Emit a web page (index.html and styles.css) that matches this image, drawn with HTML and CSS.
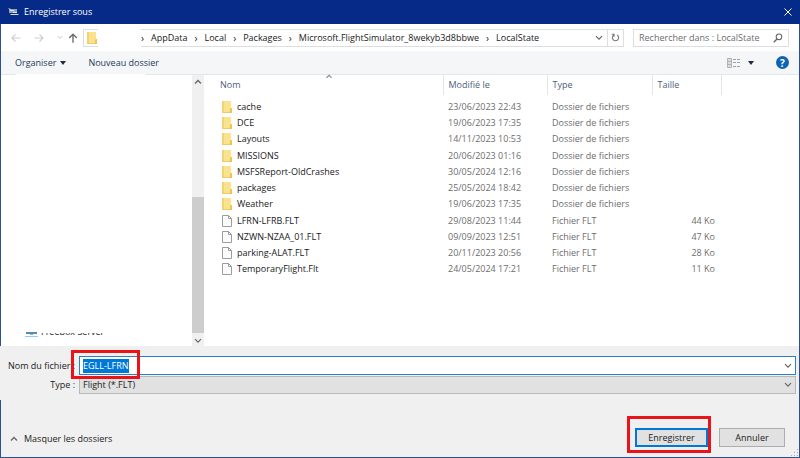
FILE: index.html
```html
<!DOCTYPE html>
<html lang="fr">
<head>
<meta charset="utf-8">
<title>Enregistrer sous</title>
<link rel="stylesheet" href="styles.css">
</head>
<body>
<svg width="0" height="0" class="defs" aria-hidden="true">
  <symbol id="folder" viewBox="0 0 12 14">
    <path d="M1 1h9v12H1z" fill="#fbe38e"/>
    <path d="M1 1h2v12H1z" fill="#f3d373"/>
    <path d="M1 12h8v1H1z" fill="#eccb66"/>
    <path d="M10 8h1v5H9v-4z" fill="#efc44e"/>
  </symbol>
  <symbol id="file" viewBox="0 0 12 14">
    <path d="M1.500 1.500h6l3 3v8h-9z" fill="#fdfdfd" stroke="#9a9da0"/>
    <path d="M7.500 1.500v3h3" fill="none" stroke="#9a9da0"/>
  </symbol>
  <symbol id="down" viewBox="0 0 8 6">
    <path d="M1 1.200l3 3 3-3" fill="none" stroke="currentColor" stroke-width="1.200"/>
  </symbol>
  <symbol id="up" viewBox="0 0 8 6">
    <path d="M1 4.500l3-3 3 3" fill="none" stroke="currentColor" stroke-width="1.300"/>
  </symbol>
  <symbol id="caret" viewBox="0 0 6 4">
    <path d="M0 0h6L3 4z" fill="#1e2b44"/>
  </symbol>
</svg>
<main class="dialog">
  <header class="titlebar">
    <svg class="app-icon" viewBox="0 0 11 8"><path d="M1 1h8v4H1z" fill="#8fa0b4"/><path d="M2 2h4v1H2zM5 4h4v1H5z" fill="#e8eef2"/><path d="M0 0l3 1-1 1zM2 6h8l1 1H3z" fill="#d8dde2"/></svg>
    <h1>Enregistrer sous</h1>
    <button class="close" aria-label="Fermer"><svg viewBox="0 0 8 8"><path d="M.5.5l7 7M7.500.5l-7 7" stroke="#fff" fill="none"/></svg></button>
  </header>

  <nav class="navbar">
    <button class="nav" aria-label="Précédent"><svg class="arrow" viewBox="0 0 10 10"><path d="M9.500 5H1M4.500 1.500L1 5l3.500 3.500" fill="none" stroke="#cfcfcf" stroke-width="1.200"/></svg></button>
    <button class="nav" aria-label="Suivant"><svg class="arrow" viewBox="0 0 10 10"><path d="M.5 5H9M5.500 1.500L9 5 5.500 8.500" fill="none" stroke="#cfcfcf" stroke-width="1.200"/></svg></button>
    <button class="nav recent" aria-label="Emplacements récents"><svg class="chev-small"><use href="#down"/></svg></button>
    <button class="nav parent" aria-label="Dossier parent"><svg class="arrow" viewBox="0 0 10 10"><path d="M5 9.800V1.200M1.200 5L5 1.200 8.800 5" fill="none" stroke="#6d6d6d" stroke-width="1.400"/></svg></button>
    <div class="address">
      <span class="root"><svg class="icon"><use href="#folder"/></svg></span>
      <div class="crumbs">
        <i>›</i><a href="#">AppData</a><i>›</i><a href="#">Local</a><i>›</i><a href="#">Packages</a><i>›</i><a href="#">Microsoft.FlightSimulator_8wekyb3d8bbwe</a><i>›</i><a href="#">LocalState</a>
        <button class="history" aria-label="Historique"><svg class="chev"><use href="#down"/></svg></button>
        <button class="refresh" aria-label="Actualiser"><svg viewBox="0 0 10 10"><path d="M3.200 2.200A3.500 3.500 0 1 0 6.800 2.200M3.400 4.200V1.300H.9" fill="none" stroke="#777" stroke-width="1.200"/></svg></button>
      </div>
    </div>
    <label class="search">
      <input type="text" aria-label="Rechercher" placeholder="Rechercher dans : LocalState">
      <svg viewBox="0 0 10 10"><circle cx="6" cy="3.800" r="2.800" fill="none" stroke="#666" stroke-width="1.100"/><path d="M4 6L.8 9.200" stroke="#666" stroke-width="1.400"/></svg>
    </label>
  </nav>

  <div class="toolbar">
    <button>Organiser <svg class="caret"><use href="#caret"/></svg></button>
    <button>Nouveau dossier</button>
    <button class="view" aria-label="Affichage"><svg class="view-icon" viewBox="0 0 14 10"><path d="M.5.5h4v9h-4zM.5 3.500h4M.5 6.500h4" fill="#ddd" stroke="#b5b2b2"/><path d="M6 1.500h3M10 1.500h3M6 4.500h3M10 4.500h3M6 8.500h3M10 8.500h3" stroke="#9da0a6"/></svg><svg class="caret"><use href="#caret"/></svg></button>
    <button class="help" aria-label="Aide">?</button>
  </div>

  <section class="content">
    <aside class="tree">
      <div class="tree-item"><svg viewBox="0 0 13 5"><path d="M1 0h11v2H1z" fill="#4e8fb8"/><path d="M5 2h3v1H5z" fill="#9ac"/><path d="M0 4h13v1H0z" fill="#9ccbe0"/></svg><span>Freebox Server</span></div>
    </aside>
    <div class="scrollbar">
      <svg class="chev"><use href="#up"/></svg>
      <div class="thumb"></div>
      <svg class="chev"><use href="#down"/></svg>
    </div>
    <div class="files">
      <svg class="sort"><use href="#up"/></svg>
      <table>
        <colgroup><col class="c-name"><col class="c-date"><col class="c-type"><col class="c-size"><col></colgroup>
        <thead><tr><th>Nom</th><th>Modifié le</th><th>Type</th><th>Taille</th><th></th></tr></thead>
        <tbody>
          <tr><td><svg class="icon"><use href="#folder"/></svg>cache</td><td>23/06/2023 22:43</td><td>Dossier de fichiers</td><td></td><td></td></tr>
          <tr><td><svg class="icon"><use href="#folder"/></svg>DCE</td><td>19/06/2023 17:35</td><td>Dossier de fichiers</td><td></td><td></td></tr>
          <tr><td><svg class="icon"><use href="#folder"/></svg>Layouts</td><td>14/11/2023 10:53</td><td>Dossier de fichiers</td><td></td><td></td></tr>
          <tr><td><svg class="icon"><use href="#folder"/></svg>MISSIONS</td><td>20/06/2023 01:16</td><td>Dossier de fichiers</td><td></td><td></td></tr>
          <tr><td><svg class="icon"><use href="#folder"/></svg>MSFSReport-OldCrashes</td><td>30/05/2024 12:16</td><td>Dossier de fichiers</td><td></td><td></td></tr>
          <tr><td><svg class="icon"><use href="#folder"/></svg>packages</td><td>25/05/2024 18:42</td><td>Dossier de fichiers</td><td></td><td></td></tr>
          <tr><td><svg class="icon"><use href="#folder"/></svg>Weather</td><td>19/06/2023 17:35</td><td>Dossier de fichiers</td><td></td><td></td></tr>
          <tr><td><svg class="icon"><use href="#file"/></svg>LFRN-LFRB.FLT</td><td>29/08/2023 11:44</td><td>Fichier FLT</td><td>44 Ko</td><td></td></tr>
          <tr><td><svg class="icon"><use href="#file"/></svg>NZWN-NZAA_01.FLT</td><td>09/09/2023 12:51</td><td>Fichier FLT</td><td>47 Ko</td><td></td></tr>
          <tr><td><svg class="icon"><use href="#file"/></svg>parking-ALAT.FLT</td><td>20/11/2023 20:56</td><td>Fichier FLT</td><td>28 Ko</td><td></td></tr>
          <tr><td><svg class="icon"><use href="#file"/></svg>TemporaryFlight.Flt</td><td>24/05/2024 17:21</td><td>Fichier FLT</td><td>11 Ko</td><td></td></tr>
        </tbody>
      </table>
    </div>
  </section>

  <form class="fields">
    <label for="name">Nom du fichier :</label>
    <div class="combo">
      <input id="name" type="text" value="EGLL-LFRN" autocomplete="off" spellcheck="false">
      <svg class="chev"><use href="#down"/></svg>
      <span class="mark mark-name"></span>
    </div>
    <label for="type">Type :</label>
    <div class="combo combo-type">
      <select id="type"><option>Flight (*.FLT)</option></select>
      <svg class="chev"><use href="#down"/></svg>
    </div>
  </form>

  <footer class="footer">
    <button class="toggle"><svg class="chev"><use href="#up"/></svg>Masquer les dossiers</button>
    <div class="primary"><button class="btn btn-default">Enregistrer</button><span class="mark mark-save"></span></div>
    <button class="btn">Annuler</button>
    <svg class="grip" viewBox="0 0 8 8"><path d="M6 0h1v1H6zM3 3h1v1H3zM6 3h1v1H6zM0 6h1v1H0zM3 6h1v1H3zM6 6h1v1H6z" fill="#aaa"/></svg>
  </footer>
</main>
<script src="select.js"></script>
</body>
</html>
```
FILE: select.js
```js
const nameField = document.getElementById("name");
nameField.focus();
nameField.select();
```
FILE: styles.css
```css
* { box-sizing: border-box; }
body {
  margin: 0;
  font: 9px/14px "Open Sans", "Noto Sans", sans-serif;
  color: #1a1a1a;
}
button, input, select { font: inherit; color: inherit; }
button { padding: 0; border: 0; background: none; }
a { color: inherit; text-decoration: none; }
svg { display: block; flex: none; }
.defs { position: absolute; }
.icon { width: 12px; height: 14px; }
.chev { width: 8px; height: 6px; color: #666; }
.caret { width: 6px; height: 4px; }

.dialog {
  min-height: 100vh;
  display: flex;
  flex-direction: column;
  border: 1px solid #2d4f9b;
  border-top: 0;
  background: #f0f0f0;
}

.titlebar {
  height: 24px;
  display: flex;
  align-items: center;
  gap: 5px;
  padding: 0 8px;
  margin: 0 -1px;
  background: #062a88;
  color: #fff;
}
.titlebar h1 { margin: 0; font-size: inherit; font-weight: 400; }
.app-icon { width: 11px; height: 8px; }
.close { margin-left: auto; }
.close svg { width: 8px; height: 8px; }

.navbar {
  height: 27px;
  display: flex;
  align-items: center;
  padding: 0 10px;
  background: #fff;
}
.nav { width: 23px; display: flex; }
.arrow { width: 10px; height: 10px; }
.recent { width: 11px; }
.chev-small { width: 6px; height: 5px; color: #bbb; }
.parent { width: 15px; }
.address { flex: 1; display: flex; justify-content: space-between; height: 18px; }
.root {
  width: 15px;
  padding: 1px 2px;
  border: 1px solid #dedede;
  border-right: 0;
}
.crumbs {
  flex: 1;
  margin-left: 43px;
  display: flex;
  align-items: center;
  border: 1px solid #dedede;
  border-left: 0;
}
.crumbs i { width: 10px; font-style: normal; text-align: left; font-size: 10px; }
.crumbs a + i { width: 17px; text-align: center; }
.history { margin-left: auto; padding: 0 4px; }
.refresh { height: 16px; padding: 0 3px; border-left: 1px solid #dedede; }
.refresh svg { width: 9px; height: 9px; }
.search {
  width: 156px;
  height: 18px;
  display: flex;
  align-items: center;
  margin-left: 9px;
  padding: 0 5px;
  border: 1px solid #dedede;
}
.search input { flex: 1; min-width: 0; padding: 0; border: 0; outline: 0; background: none; }
.search input::placeholder { color: #6d6d6d; opacity: 1; }
.search svg { width: 10px; height: 10px; }

.toolbar {
  height: 24px;
  display: flex;
  align-items: center;
  gap: 22px;
  padding: 0 10px 0 14px;
  border-bottom: 1px solid #e3e6ea;
  background: #f5f6f7;
  color: #1e395b;
}
.toolbar button { display: flex; align-items: center; gap: 4px; }
.toolbar .view { margin-left: auto; gap: 7px; }
.view-icon { width: 14px; height: 10px; }
.toolbar .help {
  width: 13px;
  height: 13px;
  justify-content: center;
  border-radius: 50%;
  background: #0f62b4;
  color: #fff;
  font-weight: 700;
  font-size: 10px;
}

.content { height: 271px; display: flex; background: #fff; }
.tree { position: relative; width: 191px; padding: 257px 24px 0; }
.tree::before { content: ""; position: absolute; left: 15px; top: -1px; width: 129px; height: 1px; background: #fff; }
.tree-item { display: flex; align-items: flex-end; gap: 3px; }
.tree-item svg { width: 13px; height: 5px; }
.tree-item span { height: 4px; display: flex; align-items: flex-end; overflow: hidden; line-height: 10px; }
.scrollbar {
  width: 12px;
  display: flex;
  flex-direction: column;
  align-items: center;
  justify-content: space-between;
  padding: 4px 0 2px;
  background: #f0f0f0;
}
.thumb { width: 12px; height: 136px; margin: auto 0 5px; background: #cdcdcd; }

.files { position: relative; flex: 1; }
.sort { position: absolute; left: 121px; top: -1px; width: 8px; height: 5px; color: #888; }
table { width: 100%; border-collapse: collapse; table-layout: fixed; }
.c-name { width: 239px; }
.c-date { width: 104px; }
.c-type { width: 105px; }
.c-size { width: 69px; }
th, td { padding: 0 0 0 5px; text-align: left; font-weight: 400; white-space: nowrap; line-height: 14px; }
th { height: 20px; border-right: 1px solid #e5e5e5; color: #4c607a; }
th:first-child { padding-left: 16px; }
th:last-child { border: 0; }
tbody::before { content: ""; display: table-row; height: 4px; }
td { height: 16px; color: #6d6d6d; }
tr:nth-child(4n) td { height: 17px; }
td:first-child { display: flex; align-items: center; gap: 4px; padding-left: 17px; color: #1a1a1a; }
td:nth-child(4) { text-align: right; padding-right: 6px; }

.fields {
  display: grid;
  grid-template-columns: 67px 1fr;
  gap: 1px 3px;
  align-items: center;
  margin-left: -1px;
  padding: 10px 3px 6px 8px;
  background: #f0f0f0;
}
.fields label { text-align: right; white-space: nowrap; }
.combo { position: relative; height: 19px; display: flex; align-items: center; margin-left: 1px; padding: 0 3px; border: 1px solid #2a80c0; background: #fff; }
.combo input { flex: 1; min-width: 0; height: 14px; padding: 0; border: 0; outline: 0; background: none; }
.combo input::selection { background: #0078d7; color: #fff; }
.combo-type { height: 18px; border-color: #b8b8b8; background: #e1e1e1; }
.combo-type select { flex: 1; appearance: none; padding: 0; border: 0; outline: 0; background: none; }
.mark { position: absolute; z-index: 1; border: 3px solid #e8141a; pointer-events: none; }
.mark-name { left: -9px; top: -7px; width: 69px; height: 29px; }
.mark-save { left: -8px; top: -12px; width: 84px; height: 37px; }

.footer {
  flex: 1;
  position: relative;
  display: flex;
  align-items: flex-end;
  gap: 11px;
  padding: 0 14px 10px 9px;
}
.toggle { height: 16px; display: flex; align-items: center; gap: 6px; margin-right: auto; }
.primary { position: relative; }
.btn { display: block; width: 66px; height: 19px; border: 1px solid #adadad; background: #e1e1e1; }
.btn-default { width: 73px; border: 2px solid #0078d7; }
.grip { position: absolute; right: 0; bottom: 0; width: 8px; height: 8px; }
```
